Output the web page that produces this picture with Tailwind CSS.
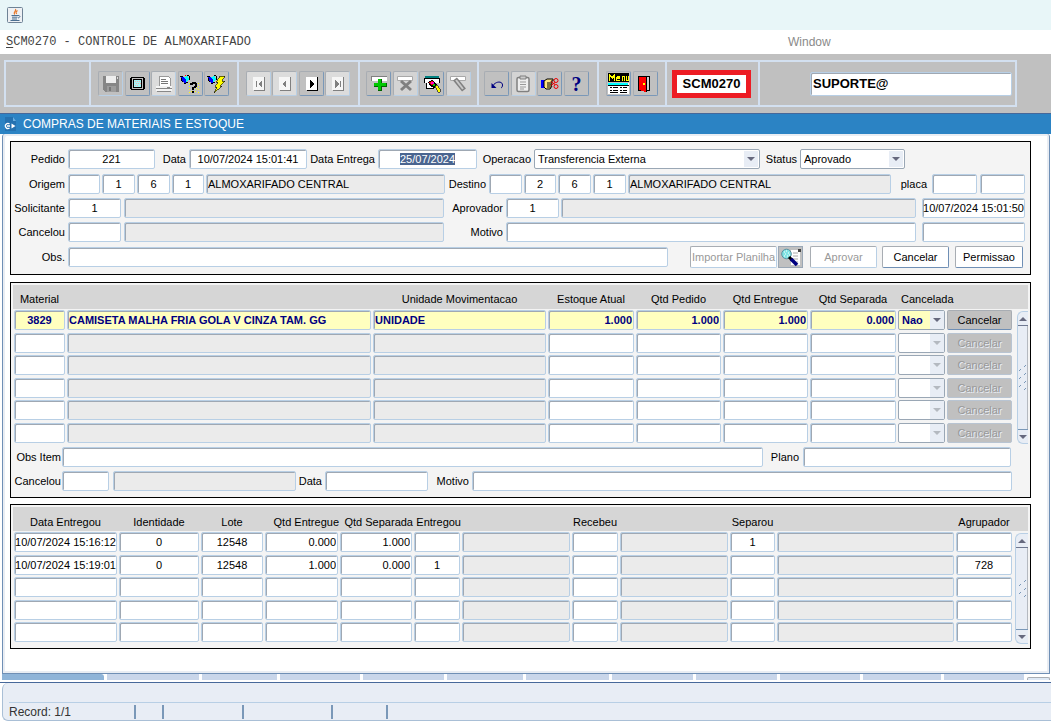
<!DOCTYPE html>
<html lang="pt-BR">
<head>
  <meta charset="UTF-8" />
  <meta name="viewport" content="width=device-width, initial-scale=1.0" />
  <script src="https://cdn.jsdelivr.net/npm/@tailwindcss/browser@4"></script>
  <title>SCM0270 - Controle de Almoxarifado</title>
</head>
<body class="bg-white font-['Liberation_Sans',Arial,sans-serif] text-[11px] leading-4 text-black [&_input]:h-5 [&_input]:min-w-0 [&_input]:rounded-[2px] [&_input]:border [&_input]:border-[#b8cfe5] [&_input]:bg-white [&_input]:shadow-[inset_1px_1px_0_#9fa8b3] [&_input]:outline-none [&_input:read-only]:bg-[#ebebeb]">

  <!-- Barra de titulo -->
  <header class="flex h-[30px] items-center bg-[#e8f6f8] px-[7px]">
    <svg class="size-4" viewBox="0 0 16 16" fill="none">
      <rect x=".5" y=".5" width="15" height="15" rx="1" fill="#eef1f4" stroke="#6f8396" />
      <path d="M8.500 2c1.500 2-3 3-.8 5.500M10.500 3.500c-1.500 1-2 1.800-.8 3.500" stroke="#e8792b" stroke-width="1.200" />
      <path d="M4.500 8.500h6.500M5 10.200h5.500M5 12h5M3.500 13.500h9" stroke="#4b6f91" />
      <path d="M11 8.500c2.500-.4 2.500 2 0 2.500" stroke="#4b6f91" />
    </svg>
  </header>

  <!-- Menu -->
  <nav class="flex h-6 items-center px-1.5 text-[12px]">
    <a href="#" class="w-[782px] font-['Liberation_Mono','Courier_New',monospace] text-[#444]"><span class="underline underline-offset-2">S</span>CM0270 - CONTROLE DE ALMOXARIFADO</a>
    <a href="#" class="text-[#8a8a8a]">Window</a>
  </nav>

  <!-- Barra de ferramentas -->
  <div class="h-[59px] bg-[#c0c0c0] pt-1.5 pr-[34px] pl-1">
    <div class="flex h-[47px] border-2 border-[#d3e0f0] [&_button]:flex [&_button]:size-[25px] [&_button]:items-center [&_button]:justify-center [&_button]:rounded-[2px] [&_button]:border [&_button]:border-[#a8adb3] [&_button]:border-r-[#7a98b8] [&_button]:border-b-[#7a98b8] [&_button:disabled]:border-r-[#b8cfe5] [&_button:disabled]:border-b-[#b8cfe5]">
      <div class="w-[83px]"></div>
      <div class="flex w-[148px] items-center justify-between border-l-2 border-[#d3e0f0] pr-2 pl-[7px]">
        <button disabled aria-label="Salvar">
          <svg width="18" height="18" viewBox="0 0 18 18" shape-rendering="crispEdges"><path d="M1 1h16v16H3l-2-2z" fill="#868686" /><path d="M4 1h10v7H4z" fill="#eee" /><path d="M15 2h1v2h-1z" fill="#ddd" /><path d="M5 11h9v6H5z" fill="#9c9c9c" /><path d="M7 12h2v4H7z" fill="#777" /></svg>
        </button>
        <button aria-label="Tela">
          <svg width="17" height="17" viewBox="0 0 17 17" shape-rendering="crispEdges"><path d="M2 2h13v1h1v11h-1v1H2v-1H1V3h1z" fill="#000" /><path d="M3 3h11v11H3z" fill="#c0c0c0" /><path d="M4 4h9v9H4z" fill="#000" /><path d="M5 5h7v7H5z" fill="#a6f4f4" /><path d="M6 6h1v1H6zM8 6h1v1H8zM10 6h1v1h-1zM7 8h1v1H7zM9 8h1v1H9zM11 8h1v1h-1zM6 10h1v1H6zM8 10h1v1H8z" fill="#f7b0b0" /></svg>
        </button>
        <button disabled aria-label="Imprimir" class="bg-[#dcdcdc]">
          <svg width="18" height="18" viewBox="0 0 18 18" shape-rendering="crispEdges"><path d="M4 1h9l2 2v8H4z" fill="#fff" stroke="#999" /><path d="M6 4h5v1H6zM6 6h7v1H6zM6 8h7v1H6z" fill="#777" /><path d="M1 11h16v5H1z" fill="#f4f4f4" /><path d="M1 13h16v1H1zM2 16h14v1H2zM12 12h3v1h-3z" fill="#888" /></svg>
        </button>
        <button aria-label="Entrar consulta">
          <svg width="20" height="20" viewBox="0 0 20 20" shape-rendering="crispEdges"><path d="M9 9h1v1H9zM9 12h1v1H9zM9 15h1v1H9zM9 18h1v1H9zM11 17h1v1h-1zM16 10h1v1h-1zM18 9h1v1h-1zM18 12h1v1h-1zM16 14h1v1h-1zM18 15h1v1h-1zM15 17h1v1h-1zM18 18h1v1h-1zM15 12h1v1h-1z" fill="#ff0" /><path d="M4 3l4-1 1 3-3 3-3-3z" fill="#0ff" /><path d="M1 3h2l3 2v4H4L2 7z" fill="#00f" /><path d="M0 2h3v1H0zM1 4h1v3H1zM2 7h1v1H2zM7 1h2v1H7zM9 2h1v4H9zM6 8h2v1H6zM4 9h2v1H4z" fill="#000" /><path d="M5 1h1v1H5z" fill="#f00" /><path d="M10 9h2V8h4v1h1v4h-1v1h-2v2h-2v-3h2v-1h1v-2h-2v1h-3zM12 17h2v2h-2z" fill="#000" /></svg>
        </button>
        <button aria-label="Executar consulta">
          <svg width="20" height="20" viewBox="0 0 20 20" shape-rendering="crispEdges"><path d="M4 3l4-1 1 3-3 3-3-3z" fill="#0ff" /><path d="M1 3h2l3 2v4H4L2 7z" fill="#00f" /><path d="M0 2h3v1H0zM1 4h1v3H1zM2 7h1v1H2zM7 1h2v1H7zM9 2h1v4H9zM6 8h2v1H6zM4 9h2v1H4z" fill="#000" /><path d="M13 2h5l-3 5h3l-5 5h2l-8 7 3-6H8l3-5H9z" fill="#ff0" stroke="#000" stroke-width=".6" /></svg>
        </button>
      </div>
      <div class="flex w-[121px] items-center justify-between border-l-2 border-[#d3e0f0] pr-2 pl-[7px]">
        <button disabled aria-label="Primeiro registro" class="bg-[#dcdcdc]">
          <svg width="17" height="17" viewBox="0 0 17 17" shape-rendering="crispEdges"><path d="M3 2h11v13H3z" fill="#f6f6f6" /><path d="M14 2h1v14H4v-1h10zM6 6h1v6H6zM8 9l4-4v8z" fill="#808080" /></svg>
        </button>
        <button disabled aria-label="Registro anterior" class="bg-[#dcdcdc]">
          <svg width="17" height="17" viewBox="0 0 17 17" shape-rendering="crispEdges"><path d="M3 2h11v13H3z" fill="#f6f6f6" /><path d="M14 2h1v14H4v-1h10zM6 9l4-4v8z" fill="#808080" /></svg>
        </button>
        <button aria-label="Proximo registro">
          <svg width="17" height="17" viewBox="0 0 17 17" shape-rendering="crispEdges"><path d="M3 2h11v13H3z" fill="#fff" /><path d="M14 2h1v14H4v-1h10zM7 5l4 4-4 4z" fill="#000" /></svg>
        </button>
        <button disabled aria-label="Ultimo registro" class="bg-[#dcdcdc]">
          <svg width="17" height="17" viewBox="0 0 17 17" shape-rendering="crispEdges"><path d="M3 2h11v13H3z" fill="#f6f6f6" /><path d="M14 2h1v14H4v-1h10zM6 5l4 4-4 4zM11 6h1v6h-1z" fill="#808080" /></svg>
        </button>
      </div>
      <div class="flex w-[119px] items-center justify-between border-l-2 border-[#d3e0f0] px-[6px]">
        <button aria-label="Inserir registro">
          <svg width="18" height="18" viewBox="0 0 18 18" shape-rendering="crispEdges"><path d="M1 1h16v5H1z" fill="#808080" /><path d="M2 2h15v4H2z" fill="#fff" /><path d="M8 4h4v4h5v4h-5v4H8v-4H4V8h4z" fill="#006400" /><path d="M8 4h3v4h5v3h-5v4H8v-4H4V8h4z" fill="#00c800" /></svg>
        </button>
        <button disabled aria-label="Excluir registro" class="bg-[#d4d4d4]">
          <svg width="18" height="18" viewBox="0 0 18 18"><path d="M1.500 1.500h15v4h-15z" fill="#fff" stroke="#a8a8a8" /><path d="M5 6l10 9M15 6L5 15" stroke="#808080" stroke-width="3" /></svg>
        </button>
        <button aria-label="Limpar registro">
          <svg width="20" height="20" viewBox="0 0 20 20" shape-rendering="crispEdges"><path d="M3 2h14v3H3z" fill="#008080" /><path d="M2 5h15v4H2z" fill="#fff" /><path d="M2 4h16v1H2zM2 4h1v5H2zM17 4h1v5h-1zM4 9h1v6H4zM4 14h8v1H4z" fill="#000" /><path d="M5 9h8v5H5z" fill="#fff" /><path d="M6 8l4-2 5 4-2 4-4-1z" fill="#000" /><path d="M7 8l3-1 2 2-2 2-2-1z" fill="#f00" /><path d="M9 8h3v2H9z" fill="#f0c" /><path d="M11 10h2v2h-2z" fill="#0c0" /><path d="M13 12l2-1 3 4v3h-2z" fill="#ff0" stroke="#000" stroke-width=".6" /></svg>
        </button>
        <button disabled aria-label="Limpar item" class="bg-[#d4d4d4]">
          <svg width="20" height="20" viewBox="0 0 20 20"><path d="M2.500 2.500h15v4h-15z" fill="#fff" stroke="#a8a8a8" /><path d="M7 5l9 11" stroke="#808080" stroke-width="5" /><path d="M8 6l7 9" stroke="#c8c8c8" stroke-width="2" /></svg>
        </button>
      </div>
      <div class="flex w-[120px] items-center justify-between border-l-2 border-[#d3e0f0] pr-2 pl-[5px]">
        <button aria-label="Desfazer">
          <svg width="18" height="18" viewBox="0 0 18 18" fill="none" stroke="#000080"><path d="M5 10.500C8 6 14.500 6 14.500 10c0 1.500-.5 2.500-1.500 3" /><path d="M3.500 8v5h5z" fill="#000080" stroke="none" /></svg>
        </button>
        <button disabled aria-label="Colar" class="bg-[#d4d4d4]">
          <svg width="18" height="18" viewBox="0 0 18 18"><rect x="3" y="2.500" width="12" height="14" rx="1.500" fill="#eee" stroke="#808080" stroke-width="1.500" /><path d="M6 1h6v3H6z" fill="#ccc" stroke="#808080" /><path d="M6 7h6M6 9.500h6M6 12h6M6 14h4" stroke="#999" /></svg>
        </button>
        <button aria-label="Lista de valores">
          <svg width="20" height="20" viewBox="0 0 20 20"><path d="M1 6h3v8H1z" fill="#00f" /><path d="M4 7l3-2h6v2h-2l1 2-1 2 1 1-2 3H6l-2-2z" fill="#ffe680" stroke="#000" /><path d="M7 9h4M7 11h4M7 13h4" stroke="#000" /><circle cx="16" cy="6.500" r="2" fill="none" stroke="#e00" /><circle cx="16" cy="12.500" r="2" fill="none" stroke="#e00" /><path d="M11 7.500l4 3M11 11.500l4-3" stroke="#e00" /></svg>
        </button>
        <button aria-label="Ajuda" class="font-['Liberation_Serif',serif] text-[20px] font-bold leading-5 text-[#000080]">?</button>
      </div>
      <div class="flex w-[68px] items-center justify-between border-l-2 border-[#d3e0f0] px-[7px]">
        <button aria-label="Menu">
          <svg width="21" height="21" viewBox="0 0 21 21" shape-rendering="crispEdges"><path d="M0 0h21v9H0z" fill="#000" /><path d="M1 8V1h1l2 3 2-3h1v7H6V4L4 6 2 4v4zM9 3h3v3H9v1h3v1H8V4h1zM14 3h3v5h-1V4h-1v4h-1zM18 3h1v4h1V3h1v5h-3z" fill="#ff0" /><path d="M0 10h21v11H0z" fill="#fff" /><path d="M0 10h20v2H0z" fill="#0ff" /><path d="M0 12h21v1H0zM2 14h2v1H2zM5 14h5v1H5zM12 14h2v1h-2zM15 14h4v1h-4zM2 17h2v1H2zM5 17h5v1H5zM12 17h2v1h-2zM15 17h4v1h-4zM2 19h8v1H2zM12 19h7v1h-7z" fill="#000" /></svg>
        </button>
        <button aria-label="Sair">
          <svg width="18" height="18" viewBox="0 0 18 18" shape-rendering="crispEdges"><path d="M1 1h12v15H1z" fill="#000" /><path d="M9 2h3v13H9z" fill="#d0d0d0" /><path d="M2 2h7v15l-7-2z" fill="#f00" /><path d="M9 2h1v15H9z" fill="#000" /><path d="M6 8h2v2H6z" fill="#ff0" /></svg>
        </button>
      </div>
      <div class="flex w-[93px] items-center border-l-2 border-[#d3e0f0] pl-[5px]">
        <div class="flex h-7 w-[79px] items-center justify-center border-[5px] border-[#ed1c24] bg-white text-[13px] font-bold">SCM0270</div>
      </div>
      <div class="flex flex-1 items-center border-l-2 border-[#d3e0f0] pr-[3px] pl-[50px] [&_input]:h-6">
        <input type="text" aria-label="Usuario" value="SUPORTE@" class="w-full pl-0.5 text-[13px] font-bold" />
      </div>
    </div>
  </div>

  <!-- Titulo da janela -->
  <div class="flex h-[21px] items-center gap-[5px] border-t border-[#46689a] bg-[#2b83c4] pl-1">
    <svg width="14" height="16" viewBox="0 0 14 16"><path d="M1 1h8l3 4v10H1z" fill="#2471b0" /><path d="M9 1v4h3" fill="#69aee0" /><path d="M5.500 8a2.500 2.500 0 1 0 0 4M3 10h3" stroke="#fff" stroke-width="1.400" fill="none" /><path d="M7.500 7.500v5l4-2.500z" fill="#fff" /></svg>
    <h1 class="text-[12px] text-white">COMPRAS DE MATERIAIS E ESTOQUE</h1>
  </div>

  <main class="mr-px ml-0.5 rounded-t-[3px] border-x border-[#6f8fb5] pt-[7px] pr-[18px] pb-6 pl-[7px] shadow-[inset_2px_2px_0_#e9edf3,inset_-2px_-2px_0_#e9edf3]">

    <!-- Cabecalho do pedido -->
    <form class="border border-black bg-[#f4f4f4] pt-[7px] pr-[5px] pb-1.5 [&_label]:shrink-0">
      <div class="flex items-center pr-[120px]">
        <label for="pedido" class="w-[57px] pr-[3px] text-right">Pedido</label>
        <input id="pedido" value="221" class="w-[87px] text-center" />
        <label for="data" class="w-[34px] pr-[3px] text-right">Data</label>
        <input id="data" value="10/07/2024 15:01:41" class="w-[118px] text-center" />
        <label for="dataEntrega" class="w-[71px] pr-[3px] text-right">Data Entrega</label>
        <input id="dataEntrega" value="25/07/2024" class="w-[99px] text-center selection:bg-[#4a6590] selection:text-white" />
        <label for="operacao" class="w-[57px] pr-[3px] text-right">Operacao</label>
        <div class="relative min-w-0 flex-1">
          <select id="operacao" class="h-5 w-full appearance-none rounded-[2px] border border-[#9aa7b5] bg-white pl-[3px] outline-none">
            <option>Transferencia Externa</option>
          </select>
          <span class="pointer-events-none absolute top-0.5 right-0.5 flex h-4 w-3.5 items-center justify-center bg-[#e8edf5]"><svg width="8" height="4" viewBox="0 0 8 4"><path d="M0 0h8L4 4z" fill="#66697e" /></svg></span>
        </div>
        <label for="status" class="w-[40px] pr-[3px] text-right">Status</label>
        <div class="relative w-[105px]">
          <select id="status" class="h-5 w-full appearance-none rounded-[2px] border border-[#9aa7b5] bg-white pl-[3px] outline-none">
            <option>Aprovado</option>
          </select>
          <span class="pointer-events-none absolute top-0.5 right-0.5 flex h-4 w-3.5 items-center justify-center bg-[#e8edf5]"><svg width="8" height="4" viewBox="0 0 8 4"><path d="M0 0h8L4 4z" fill="#66697e" /></svg></span>
        </div>
      </div>

      <div class="mt-[5px] flex items-center">
        <label for="origem" class="w-[57px] pr-[3px] text-right">Origem</label>
        <div class="flex gap-0.5">
          <input id="origem" class="w-8 text-center" />
          <input value="1" aria-label="Origem empresa" class="w-[33px] text-center" />
          <input value="6" aria-label="Origem filial" class="w-[33px] text-center" />
          <input value="1" aria-label="Origem local" class="w-8 text-center" />
          <input value="ALMOXARIFADO CENTRAL" aria-label="Origem descricao" readonly class="w-[239px] pl-px" />
        </div>
        <label for="destino" class="w-[44px] pr-[3px] text-right">Destino</label>
        <div class="flex min-w-0 flex-1 gap-0.5">
          <input id="destino" class="w-[33px] text-center" />
          <input value="2" aria-label="Destino empresa" class="w-8 text-center" />
          <input value="6" aria-label="Destino filial" class="w-[33px] text-center" />
          <input value="1" aria-label="Destino local" class="w-[33px] text-center" />
          <input value="ALMOXARIFADO CENTRAL" aria-label="Destino descricao" readonly class="flex-1 pl-px" />
        </div>
        <label for="placa" class="w-[41px] pr-[5px] text-right">placa</label>
        <div class="flex gap-[3px]">
          <input id="placa" class="w-[45px]" />
          <input aria-label="Placa UF" class="w-[45px]" />
        </div>
      </div>

      <div class="mt-1 flex items-center">
        <label for="solicitante" class="w-[57px] pr-[3px] text-right">Solicitante</label>
        <input id="solicitante" value="1" class="w-[53px] text-center" />
        <input aria-label="Nome do solicitante" readonly class="ml-[3px] w-[320px]" />
        <label for="aprovador" class="w-[62px] pr-[3px] text-right">Aprovador</label>
        <input id="aprovador" value="1" class="w-[53px] text-center" />
        <input aria-label="Nome do aprovador" readonly class="ml-0.5 flex-1" />
        <input aria-label="Data da aprovacao" value="10/07/2024 15:01:50" class="ml-1.5 w-[103px] text-center" />
      </div>

      <div class="mt-1 flex items-center">
        <label for="cancelou" class="w-[57px] pr-[3px] text-right">Cancelou</label>
        <input id="cancelou" class="w-[53px]" />
        <input aria-label="Nome de quem cancelou" readonly class="ml-[3px] w-[320px]" />
        <label for="motivo" class="w-[62px] pr-[3px] text-right">Motivo</label>
        <input id="motivo" class="flex-1" />
        <input aria-label="Data do cancelamento" class="ml-1.5 w-[103px]" />
      </div>

      <div class="mt-1 flex items-center">
        <label for="obs" class="w-[57px] pr-[3px] text-right">Obs.</label>
        <input id="obs" class="flex-1" />
        <button type="button" disabled class="ml-[22px] h-[22px] w-[87px] rounded-[2px] border border-[#b8cfe5] border-t-[#a8adb3] border-l-[#a8adb3] bg-white whitespace-nowrap text-[#999]">Importar Planilha</button>
        <button type="button" aria-label="Pesquisar planilha" class="ml-px flex h-[22px] w-[25px] items-center justify-center border border-[#9aa7b5] bg-[#c0c0c0]">
          <svg width="22" height="19" viewBox="0 0 22 19"><path d="M11 2h9v15h-9z" fill="#fff" /><path d="M13 5h5M13 8h5M13 11h5M13 14h5" stroke="#aaa" /><path d="M18 1h3v3h-3z" fill="#444" /><circle cx="6.500" cy="6" r="4.800" fill="#7fe3e3" stroke="#5b8fa0" /><path d="M4 4h1M6 3h1M8 5h1M5 6h1M7 8h1M9 7h1M4 8h1" stroke="#fff" /><path d="M9 9l3 3" stroke="#000" stroke-width="3" /><path d="M11 11l6 6" stroke="#000080" stroke-width="3.500" /></svg>
        </button>
        <button type="button" disabled class="ml-[7px] h-[22px] w-[67px] rounded-[2px] border border-[#b8cfe5] border-t-[#a8adb3] border-l-[#a8adb3] bg-white text-[#999]">Aprovar</button>
        <button type="button" class="ml-[5px] h-[22px] w-[67px] rounded-[2px] border border-[#6f8fb5] border-t-[#a8adb3] border-l-[#a8adb3] bg-white">Cancelar</button>
        <button type="button" class="mr-0.5 ml-[6px] h-[22px] w-[68px] rounded-[2px] border border-[#6f8fb5] border-t-[#a8adb3] border-l-[#a8adb3] bg-white">Permissao</button>
      </div>
    </form>

    <!-- Itens do pedido -->
    <section class="mt-[7px] border border-black bg-[#f4f4f4] px-0.5 pt-0.5 pb-1.5">
      <div class="flex">
        <table class="min-w-0 flex-1 table-fixed border-collapse [&_th]:h-6 [&_th]:bg-[#d6d6d6] [&_th]:p-0 [&_th]:pt-1 [&_th]:font-normal [&_th]:whitespace-nowrap">
          <colgroup>
            <col class="w-[53px]" /><col /><col class="w-[175px]" /><col class="w-[88px]" /><col class="w-[87px]" /><col class="w-[87px]" /><col class="w-[88px]" /><col class="w-[49px]" /><col class="w-[67px]" />
          </colgroup>
          <thead>
            <tr>
              <th>Material</th><th></th><th>Unidade Movimentacao</th><th>Estoque Atual</th><th>Qtd Pedido</th><th>Qtd Entregue</th><th>Qtd Separada</th>
              <th colspan="2" class="text-left"><span class="pl-1">Cancelada</span></th>
            </tr>
          </thead>
          <tbody id="itens"></tbody>
        </table>
        <div class="flex w-[15px] flex-col">
          <div class="h-6 bg-[#d6d6d6]"></div>
          <div class="mt-0.5 ml-1 flex flex-1 flex-col rounded-l-[6px] border border-r-0 border-[#b8cfe5] bg-[#e8edf5]">
            <div class="flex h-3.5 items-center justify-center border-b border-[#6f7890]"><svg width="8" height="4" viewBox="0 0 8 4"><path d="M0 4h8L4 0z" fill="#66697e" /></svg></div>
            <div class="flex flex-1 items-center justify-end border-r border-[#b4b9c0]"><svg width="9" height="27" viewBox="0 0 9 27" stroke="#7a98b8"><path d="M1 7l2-2M6 3l2-2M1 15l2-2M6 11l2-2M1 23l2-2M6 19l2-2M6 26l2-2" /></svg></div>
            <div class="flex h-3.5 items-center justify-center border-t border-[#7a98b8]"><svg width="8" height="4" viewBox="0 0 8 4"><path d="M0 0h8L4 4z" fill="#66697e" /></svg></div>
          </div>
        </div>
      </div>
      <div class="mt-[3px] flex items-center pr-[17px]">
        <label for="obsItem" class="w-[49px] pr-px text-right whitespace-nowrap">Obs Item</label>
        <input id="obsItem" class="flex-1" />
        <label for="plano" class="w-[40px] pr-1 text-right">Plano</label>
        <input id="plano" class="w-[208px]" />
      </div>
      <div class="mt-1 flex items-center pr-4">
        <label for="cancelouItem" class="w-[49px] pr-px text-right whitespace-nowrap">Cancelou</label>
        <input id="cancelouItem" class="w-[47px]" />
        <input aria-label="Nome de quem cancelou o item" readonly class="ml-1 w-[183px]" />
        <label for="dataItem" class="w-[29px] pr-[3px] text-right">Data</label>
        <input id="dataItem" class="w-[103px]" />
        <label for="motivoItem" class="w-[44px] pr-[3px] text-right">Motivo</label>
        <input id="motivoItem" class="flex-1" />
      </div>
    </section>

    <!-- Entregas do item -->
    <section class="mt-1.5 border border-black bg-[#f4f4f4] px-0.5 pt-0.5 pb-1">
      <div class="flex">
        <table class="min-w-0 flex-1 table-fixed border-collapse [&_th]:h-6 [&_th]:bg-[#d6d6d6] [&_th]:p-0 [&_th]:pt-1.5 [&_th]:font-normal [&_th]:whitespace-nowrap">
          <colgroup>
            <col class="w-[105px]" /><col class="w-[82px]" /><col class="w-[64px]" /><col class="w-[75px]" /><col class="w-[74px]" /><col class="w-[48px]" /><col class="w-[110px]" /><col class="w-[48px]" /><col class="w-[110px]" /><col class="w-[47px]" /><col /><col class="w-[58px]" />
          </colgroup>
          <thead>
            <tr>
              <th>Data Entregou</th><th>Identidade</th><th>Lote</th><th class="text-right">Qtd Entregue</th><th class="text-right">Qtd Separada</th><th class="text-right">Entregou</th><th></th><th>Recebeu</th><th></th><th>Separou</th><th></th><th>Agrupador</th>
            </tr>
          </thead>
          <tbody id="entregas"></tbody>
        </table>
        <div class="flex w-[15px] flex-col">
          <div class="h-6 bg-[#d6d6d6]"></div>
          <div class="mt-0.5 ml-0.5 flex flex-1 flex-col rounded-l-[6px] border border-r-0 border-[#b8cfe5] bg-[#e8edf5]">
            <div class="flex h-3.5 items-center justify-center border-b border-[#6f7890]"><svg width="8" height="4" viewBox="0 0 8 4"><path d="M0 4h8L4 0z" fill="#66697e" /></svg></div>
            <div class="flex flex-1 items-center justify-end border-r border-[#b4b9c0]"><svg width="9" height="19" viewBox="0 0 9 19" stroke="#7a98b8"><path d="M1 7l2-2M6 3l2-2M1 15l2-2M6 11l2-2M6 18l2-2" /></svg></div>
            <div class="flex h-3.5 items-center justify-center border-t border-[#7a98b8]"><svg width="8" height="4" viewBox="0 0 8 4"><path d="M0 0h8L4 4z" fill="#66697e" /></svg></div>
          </div>
        </div>
      </div>
    </section>
  </main>

  <!-- Abas inferiores -->
  <div class="mr-px ml-0.5 flex h-[9px] gap-[3px] border-t border-[#6f8fb5] pb-0.5">
    <div class="w-[102px] rounded-tr-[3px] bg-[#8fb4d8]"></div>
    <div class="w-[92px] bg-[#c9d6ea]"></div>
    <div class="w-[75px] bg-[#c9d6ea]"></div>
    <div class="flex-1 bg-[#c9d6ea]"></div>
    <div class="w-[81px] bg-[#c9d6ea]"></div>
    <div class="w-[76px] bg-[#c9d6ea]"></div>
    <div class="w-[83px] bg-[#c9d6ea]"></div>
    <div class="w-[81px] bg-[#c9d6ea]"></div>
    <div class="w-[81px] bg-[#c9d6ea]"></div>
    <div class="w-[80px] bg-[#c9d6ea]"></div>
    <div class="w-[78px] bg-[#c9d6ea]"></div>
    <div class="w-[80px] bg-[#c9d6ea]"></div>
    <div class="mt-[3px] w-[23px] rounded-t-[2px] border border-b-0 border-[#a8adb3] bg-[#dfe9f5]"></div>
  </div>

  <!-- Barra de status -->
  <footer class="border-t border-[#46689a] text-[12px] text-[#333]">
    <div class="ml-0.5 rounded-l-[6px] border-b border-l border-[#a9bfd6] bg-[#e8edf5] pl-1.5">
      <div class="h-5 border-b border-[#b8cfe5]"></div>
      <div class="flex h-[17px] items-center">
        <div class="w-[125px]">Record: 1/1</div>
        <div class="h-3.5 w-7 border-l-2 border-[#7a98b8]"></div>
        <div class="h-3.5 w-[80px] border-l-2 border-[#7a98b8]"></div>
        <div class="h-3.5 w-[89px] border-l-2 border-[#7a98b8]"></div>
        <div class="h-3.5 w-[55px] border-l-2 border-[#7a98b8]"></div>
        <div class="h-3.5 flex-1 border-l-2 border-[#7a98b8]"></div>
      </div>
    </div>
  </footer>

  <script>
    const itens = [
      ['3829', 'CAMISETA MALHA FRIA GOLA V CINZA TAM. GG', 'UNIDADE', '1.000', '1.000', '1.000', '0.000', 'Nao'],
      [], [], [], [], []
    ];

    const entregas = [
      ['10/07/2024 15:16:12', '0', '12548', '0.000', '1.000', '', '', '', '', '1', '', ''],
      ['10/07/2024 15:19:01', '0', '12548', '1.000', '0.000', '1', '', '', '', '', '', '728'],
      [], [], []
    ];

    const colItens = ['Material', 'Descricao', 'Unidade Movimentacao', 'Estoque Atual', 'Qtd Pedido', 'Qtd Entregue', 'Qtd Separada'];
    const colEntregas = ['Data Entregou', 'Identidade', 'Lote', 'Qtd Entregue', 'Qtd Separada', 'Entregou', 'Nome entregou', 'Recebeu', 'Nome recebeu', 'Separou', 'Nome separou', 'Agrupador'];

    function celula(valor, rotulo, alinhamento, somenteLeitura) {
      return `<td class="px-px pt-px pb-0 align-top"><input aria-label="${rotulo}" value="${valor || ''}" ${somenteLeitura ? 'readonly' : ''} class="block w-full ${alinhamento}" /></td>`;
    }

    document.getElementById('itens').innerHTML = itens.map((item) => {
      const ativo = item.length > 0;
      const campos = colItens.map((rotulo, i) => {
        const alinhamento = i === 0 ? 'text-center' : i < 3 ? 'px-px text-left' : 'px-px text-right';
        return celula(item[i], rotulo, alinhamento, i === 1 || i === 2);
      }).join('');
      return `
        <tr class="odd:h-[23px] even:h-[22px] ${ativo ? 'font-bold text-[#000080] [&_input]:bg-[#ffffbf]!' : ''}">
          ${campos}
          <td class="px-px pt-px pb-0 align-top">
            <div class="relative">
              <select aria-label="Cancelada" ${ativo ? '' : 'disabled'} class="block h-5 w-full appearance-none rounded-[2px] border border-[#9aa7b5] pl-[3px] opacity-100 outline-none ${ativo ? 'bg-[#ffffbf]' : 'bg-white'}"><option>${item[7] || ''}</option></select>
              <span class="pointer-events-none absolute top-px right-px flex h-[18px] w-3.5 items-center justify-center bg-[#e8edf5] ${ativo ? 'text-[#66697e]' : 'text-[#b4b9c0]'}"><svg width="8" height="4" viewBox="0 0 8 4"><path d="M0 0h8L4 4z" fill="currentColor" /></svg></span>
            </div>
          </td>
          <td class="px-px pt-px pb-0 align-top">
            <button type="button" ${ativo ? '' : 'disabled'} class="block h-5 w-full rounded-[2px] border bg-[#c0c0c0] font-normal ${ativo ? 'border-[#a8adb3] border-b-[#6f8fb5] text-black' : 'border-[#b8c4d2] text-[#999] text-shadow-[1px_1px_0_#e8edf5]'}">Cancelar</button>
          </td>
        </tr>`;
    }).join('');

    document.getElementById('entregas').innerHTML = entregas.map((entrega) => {
      const campos = colEntregas.map((rotulo, i) => {
        const alinhamento = i === 3 || i === 4 ? 'px-px text-right' : 'text-center';
        return celula(entrega[i], rotulo, alinhamento, i === 6 || i === 8 || i === 10);
      }).join('');
      return `<tr class="odd:h-[23px] even:h-[22px]">${campos}</tr>`;
    }).join('');

    // Foco inicial no campo de data de entrega
    const dataEntrega = document.getElementById('dataEntrega');
    dataEntrega.focus();
    dataEntrega.select();
  </script>
</body>
</html>
